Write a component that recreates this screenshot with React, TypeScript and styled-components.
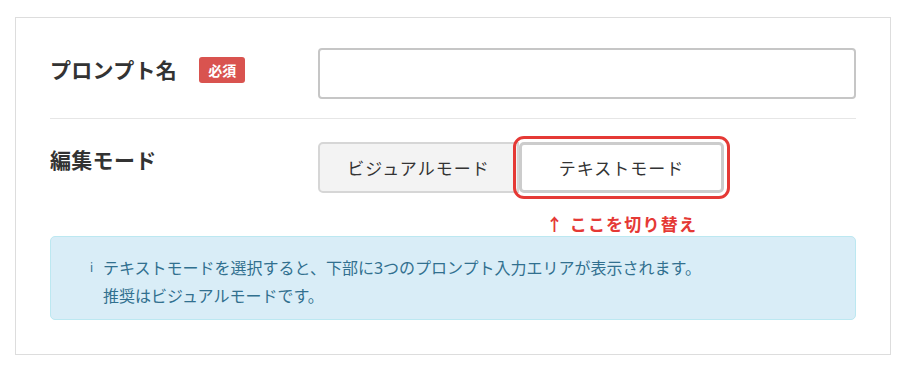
import * as React from "react";
import styled, { createGlobalStyle } from "styled-components";

const GlobalStyle = createGlobalStyle`
  body {
    margin: 0;
    background: #fff;
    font-family: "Noto Sans", "Noto Sans CJK JP", sans-serif;
    color: #333;
  }
`;

const Panel = styled.section`
  box-sizing: border-box;
  width: 876px;
  margin: 17px 0 0 15px;
  padding: 0 34px 34px;
  border: 1px solid #dddddd;
  background: #fff;
`;

const FormRow = styled.div<{ divided?: boolean }>`
  display: grid;
  grid-template-columns: 268px 1fr;
  padding: ${p => (p.divided ? "30px 0 19px" : "23px 0 0")};
  border-bottom: ${p => (p.divided ? "1px solid #e6e6e6" : "none")};
`;

const LabelCell = styled.div<{ offset?: number }>`
  display: flex;
  align-items: center;
  gap: 22px;
  height: 30px;
  margin-top: ${p => p.offset || 0}px;
`;

const Label = styled.span`
  font-size: 21px;
  font-weight: 700;
  letter-spacing: 0.3px;
  color: #333;
  line-height: 30px;
`;

const RequiredBadge = styled.span`
  display: inline-flex;
  align-items: center;
  justify-content: center;
  height: 26px;
  padding: 0 9px;
  border-radius: 3px;
  background: #d9534f;
  color: #fff;
  font-size: 14px;
  font-weight: 700;
`;

const TextInput = styled.input`
  box-sizing: border-box;
  width: 100%;
  height: 51px;
  border: 2px solid #c6c6c6;
  border-radius: 4px;
  background: #fff;
  outline: none;
`;

const ModeColumn = styled.div`
  display: flex;
  flex-direction: column;
`;

const ButtonGroup = styled.div`
  display: flex;
`;

const ModeButton = styled.button<{ active?: boolean }>`
  box-sizing: border-box;
  height: 51px;
  width: ${p => (p.active ? "205px" : "201px")};
  border: ${p => (p.active ? "3px solid #cccccc" : "2px solid #d6d6d6")};
  border-radius: ${p => (p.active ? "5px" : "5px 0 0 5px")};
  background: ${p => (p.active ? "#ffffff" : "#f3f3f3")};
  color: #333;
  font-family: "Noto Sans", "Noto Sans CJK JP", sans-serif;
  font-size: 17px;
  letter-spacing: 1px;
  padding: 0;
  cursor: pointer;
  ${p =>
    p.active &&
    `
    outline: 3px solid #e53935;
    outline-offset: 3px;
    position: relative;
  `}
`;

const SwitchNote = styled.div`
  margin: 21px 0 0 201px;
  width: 205px;
  text-align: center;
  color: #e53935;
  font-size: 17px;
  font-weight: 700;
  letter-spacing: 1.2px;
  line-height: 22px;
`;

const InfoBox = styled.div`
  display: flex;
  box-sizing: border-box;
  height: 84px;
  padding: 17px 0 9px 39px;
  border: 1px solid #bce8f1;
  border-radius: 5px;
  background: #d9edf7;
  color: #31708f;
  font-size: 16px;
  line-height: 28px;
`;

const InfoIcon = styled.span`
  width: 13px;
  font-size: 12px;
  flex-shrink: 0;
`;

const InfoText = styled.div`
  display: flex;
  flex-direction: column;
`;

export default function App() {
  return (
    <>
      <GlobalStyle />
      <Panel>
        <FormRow divided>
          <LabelCell offset={7}>
            <Label>プロンプト名</Label>
            <RequiredBadge>必須</RequiredBadge>
          </LabelCell>
          <TextInput type="text" />
        </FormRow>
        <FormRow>
          <LabelCell offset={3}>
            <Label>編集モード</Label>
          </LabelCell>
          <ModeColumn>
            <ButtonGroup>
              <ModeButton>ビジュアルモード</ModeButton>
              <ModeButton active>テキストモード</ModeButton>
            </ButtonGroup>
            <SwitchNote>↑ ここを切り替え</SwitchNote>
          </ModeColumn>
        </FormRow>
        <InfoBox>
          <InfoIcon>i</InfoIcon>
          <InfoText>
            <span>テキストモードを選択すると、下部に3つのプロンプト入力エリアが表示されます。</span>
            <span>推奨はビジュアルモードです。</span>
          </InfoText>
        </InfoBox>
      </Panel>
    </>
  );
}
